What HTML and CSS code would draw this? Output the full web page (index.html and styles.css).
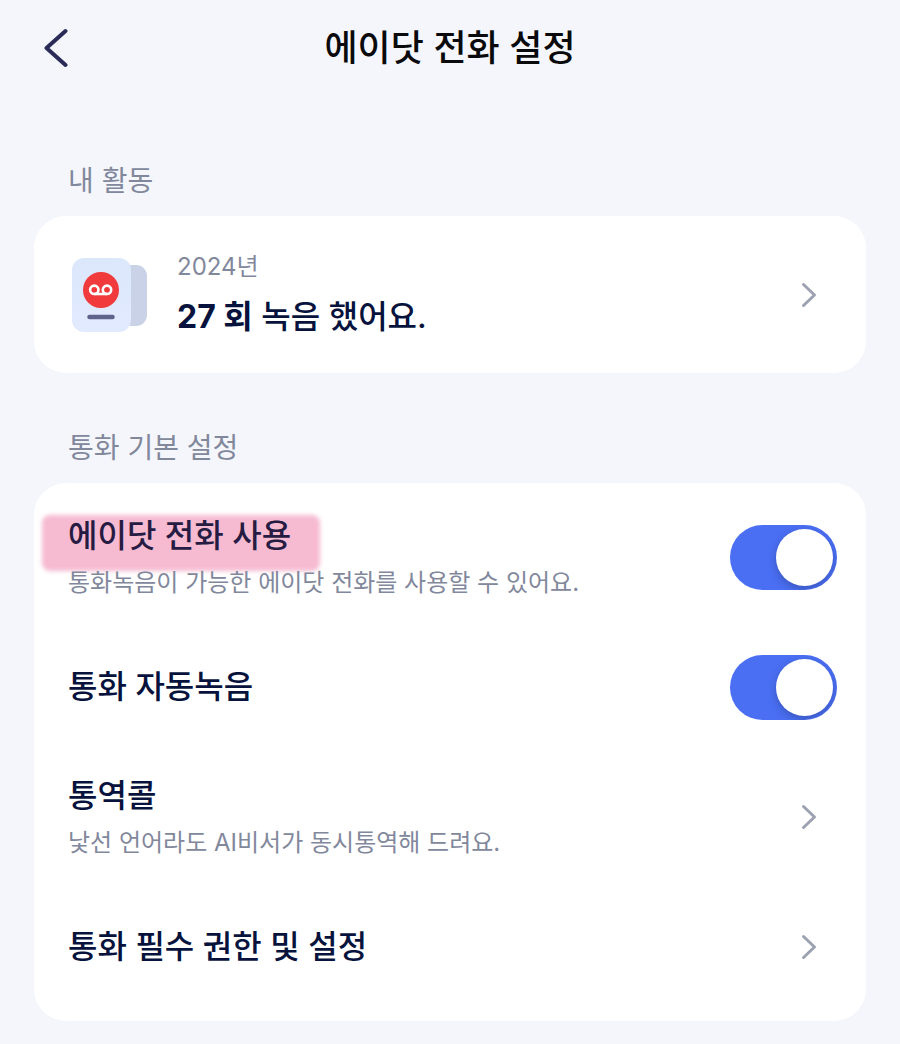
FILE: index.html
```html
<!DOCTYPE html>
<html lang="ko">
<head>
  <meta charset="utf-8">
  <meta name="viewport" content="width=device-width, initial-scale=1">
  <title>에이닷 전화 설정</title>
  <link rel="stylesheet" href="styles.css">
</head>
<body>
  <header class="topbar">
    <button class="back" type="button" aria-label="뒤로">
      <svg width="24" height="40" viewBox="0 0 24 40" aria-hidden="true"><path d="M21.500 3 2.500 20l19 17"/></svg>
    </button>
    <h1 class="title">에이닷 전화 설정</h1>
  </header>
  <main class="content">
    <section class="group">
      <h2 class="group-label">내 활동</h2>
      <a class="card activity" href="#activity">
        <svg class="activity-icon" width="78" height="76" viewBox="0 0 78 76" aria-hidden="true">
          <defs>
            <linearGradient id="front" x1="0" y1="0" x2="0" y2="1"><stop offset="0" stop-color="#dbe7fb"/><stop offset="1" stop-color="#e2eaff"/></linearGradient>
          </defs>
          <rect x="36" y="8" width="40" height="61" rx="11" fill="#c9d2e6"/>
          <rect x="1" y="1" width="59" height="74" rx="12" fill="url(#front)"/>
          <circle cx="30" cy="33" r="18" fill="#f03a3c"/>
          <g fill="none" stroke="#fff" stroke-width="2.600"><circle cx="23.300" cy="32.800" r="4.200"/><circle cx="36" cy="32.800" r="4.200"/><path d="M23.300 37h12.700"/></g>
          <path d="M18.500 60h23" stroke="#5f628b" stroke-width="4.500" stroke-linecap="round"/>
        </svg>
        <span class="activity-text">
          <span class="year">2024년</span>
          <span class="count"><strong>27 회</strong> 녹음 했어요.</span>
        </span>
        <svg class="chevron" width="36" height="28" viewBox="0 0 36 28" aria-hidden="true"><path d="M2.500 3.500 13.500 14 2.500 24.500"/></svg>
      </a>
    </section>
    <section class="group">
      <h2 class="group-label">통화 기본 설정</h2>
      <div class="card settings">
        <label class="row">
          <span class="row-text">
            <span class="row-title marked">에이닷 전화 사용</span>
            <span class="row-sub">통화녹음이 가능한 에이닷 전화를 사용할 수 있어요.</span>
          </span>
          <input class="toggle" type="checkbox" role="switch" checked>
        </label>
        <label class="row">
          <span class="row-text"><span class="row-title">통화 자동녹음</span></span>
          <input class="toggle" type="checkbox" role="switch" checked>
        </label>
        <a class="row" href="#interpreter">
          <span class="row-text">
            <span class="row-title">통역콜</span>
            <span class="row-sub">낯선 언어라도 AI비서가 동시통역해 드려요.</span>
          </span>
          <svg class="chevron" width="36" height="28" viewBox="0 0 36 28" aria-hidden="true"><path d="M2.500 3.500 13.500 14 2.500 24.500"/></svg>
        </a>
        <a class="row" href="#permissions">
          <span class="row-text"><span class="row-title">통화 필수 권한 및 설정</span></span>
          <svg class="chevron" width="36" height="28" viewBox="0 0 36 28" aria-hidden="true"><path d="M2.500 3.500 13.500 14 2.500 24.500"/></svg>
        </a>
      </div>
    </section>
  </main>
</body>
</html>
```
FILE: styles.css
```css
* {
  box-sizing: border-box;
}

body {
  margin: 0;
  background: #f4f6fb;
  color: #07133d;
  font-family: Inter, "Noto Sans CJK KR", sans-serif;
}

a {
  color: inherit;
  text-decoration: none;
}

.topbar {
  display: grid;
  grid-template-columns: 64px 1fr 64px;
  align-items: center;
  height: 96px;
  padding: 0 24px;
}

.back {
  display: flex;
  justify-content: center;
  padding: 8px 0;
  border: 0;
  background: none;
  cursor: pointer;
}

.back svg {
  fill: none;
  stroke: #2a2b58;
  stroke-width: 4;
  stroke-linecap: round;
  stroke-linejoin: round;
}

.title {
  margin: 0;
  color: #0a0a0c;
  font-size: 36px;
  font-weight: 500;
  line-height: 48px;
  text-align: center;
}

.content {
  padding: 65px 34px 23px;
}

.group + .group {
  margin-top: 55px;
}

.group-label {
  margin: 0 34px 15px;
  color: #82889c;
  font-size: 28px;
  font-weight: 400;
  line-height: 40px;
}

.card {
  border-radius: 32px;
  background: #fff;
}

.activity {
  display: flex;
  align-items: center;
  gap: 28px;
  min-height: 157px;
  padding: 24px 29px 24px 37px;
}

.activity-icon,
.chevron,
.toggle {
  flex: none;
}

.activity-text,
.row-text {
  display: flex;
  flex: 1;
  flex-direction: column;
  align-items: flex-start;
}

.year {
  color: #82889c;
  font-size: 24px;
  line-height: 36px;
}

.count {
  margin-top: 8px;
  font-size: 32px;
  font-weight: 500;
  line-height: 48px;
}

.count strong {
  font-weight: 700;
}

.settings {
  padding: 9px 0;
}

.row {
  display: flex;
  align-items: center;
  gap: 24px;
  min-height: 130px;
  padding: 16px 29px 16px 34px;
  cursor: pointer;
}

.row-title {
  font-size: 32px;
  font-weight: 500;
  line-height: 46px;
}

.row-sub {
  position: relative;
  margin-top: 6px;
  color: #82889c;
  font-size: 24px;
  line-height: 36px;
}

.marked {
  position: relative;
  z-index: 0;
  color: #261b42;
}

.marked::before {
  content: "";
  position: absolute;
  z-index: -1;
  inset: 2px -29px -12px -26px;
  border-radius: 8px;
  background: #f6bad1;
  filter: blur(2px);
}

.chevron {
  fill: none;
  stroke: #9da2b3;
  stroke-width: 3;
  stroke-linecap: round;
  stroke-linejoin: round;
}

.toggle {
  display: flex;
  align-items: center;
  justify-content: flex-end;
  width: 107px;
  height: 65px;
  margin: 0;
  padding: 4px;
  overflow: hidden;
  border-radius: 33px;
  background: #4a6ff3;
  appearance: none;
  cursor: pointer;
}

.toggle::before {
  content: "";
  width: 57px;
  height: 57px;
  border-radius: 50%;
  background: #fff;
  box-shadow: 0 3px 8px rgba(30, 40, 90, 0.35);
}

.toggle:not(:checked) {
  justify-content: flex-start;
  background: #c9cedb;
}
```
